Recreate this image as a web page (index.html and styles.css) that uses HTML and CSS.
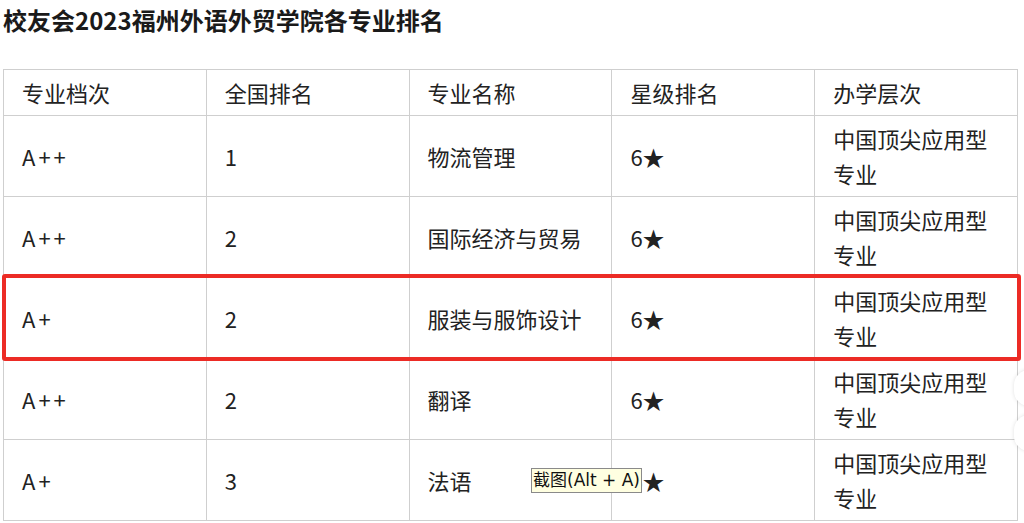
FILE: index.html
```html
<!DOCTYPE html>
<html lang="zh-CN">
<head>
<meta charset="utf-8">
<title>校友会2023福州外语外贸学院各专业排名</title>
<link rel="stylesheet" href="styles.css">
</head>
<body>
<div class="page">
  <h1 class="title">校友会2023福州外语外贸学院各专业排名</h1>
  <table class="rank">
    <thead>
      <tr><td>专业档次</td><td>全国排名</td><td>专业名称</td><td>星级排名</td><td>办学层次</td></tr>
    </thead>
    <tbody>
      <tr><td class="grade">A++</td><td>1</td><td>物流管理</td><td>6★</td><td>中国顶尖应用型专业</td></tr>
      <tr><td class="grade">A++</td><td>2</td><td>国际经济与贸易</td><td>6★</td><td>中国顶尖应用型专业</td></tr>
      <tr><td class="grade">A+</td><td>2</td><td>服装与服饰设计</td><td>6★</td><td>中国顶尖应用型专业</td></tr>
      <tr><td class="grade">A++</td><td>2</td><td>翻译</td><td>6★</td><td>中国顶尖应用型专业</td></tr>
      <tr><td class="grade">A+</td><td>3</td><td>法语</td><td>6★</td><td>中国顶尖应用型专业</td></tr>
    </tbody>
  </table>
  <div class="highlight"></div>
  <div class="tip">截图(Alt + A)</div>
  <div class="edge edge-a"></div>
  <div class="edge edge-b"></div>
</div>
</body>
</html>
```

FILE: styles.css
```css
html, body {
  margin: 0;
  padding: 0;
  background: #ffffff;
}
body {
  font-family: "Noto Sans CJK SC", "Noto Sans", sans-serif;
  color: #222222;
  overflow: hidden;
}
.page {
  position: relative;
  padding-left: 3px;
  height: 523px;
}
.title {
  margin: 0 0 31px 0;
  padding-top: 2px;
  font-size: 24px;
  line-height: 36px;
  font-weight: 700;
  color: #1a1a1a;
}
.rank {
  border-collapse: collapse;
  table-layout: fixed;
  width: 1015px;
  font-size: 22px;
  font-family: "Noto Sans CJK SC", sans-serif;
}
.rank td {
  border: 1px solid #cfcfcf;
  padding: 5px 18px;
  line-height: 35px;
  vertical-align: middle;
  color: #222222;
}
.rank td.grade {
  letter-spacing: 3px;
}
.highlight {
  position: absolute;
  left: 2px;
  top: 274px;
  width: 1011px;
  height: 79px;
  border: 4px solid #ec2b25;
  border-radius: 3px;
}
.tip {
  position: absolute;
  left: 531px;
  top: 468px;
  padding: 0 1px;
  font-family: "DejaVu Sans", "Noto Sans CJK SC", sans-serif;
  font-size: 17px;
  line-height: 23px;
  background: #ffffe1;
  border: 1px solid #8a8a8a;
  color: #111111;
  white-space: nowrap;
}
.edge {
  position: absolute;
  left: 1014px;
  width: 30px;
  height: 36px;
  border-radius: 18px;
  background: #ffffff;
  box-shadow: 0 0 4px rgba(0, 0, 0, 0.12);
}
.edge-a {
  top: 370px;
}
.edge-b {
  top: 415px;
}
```
